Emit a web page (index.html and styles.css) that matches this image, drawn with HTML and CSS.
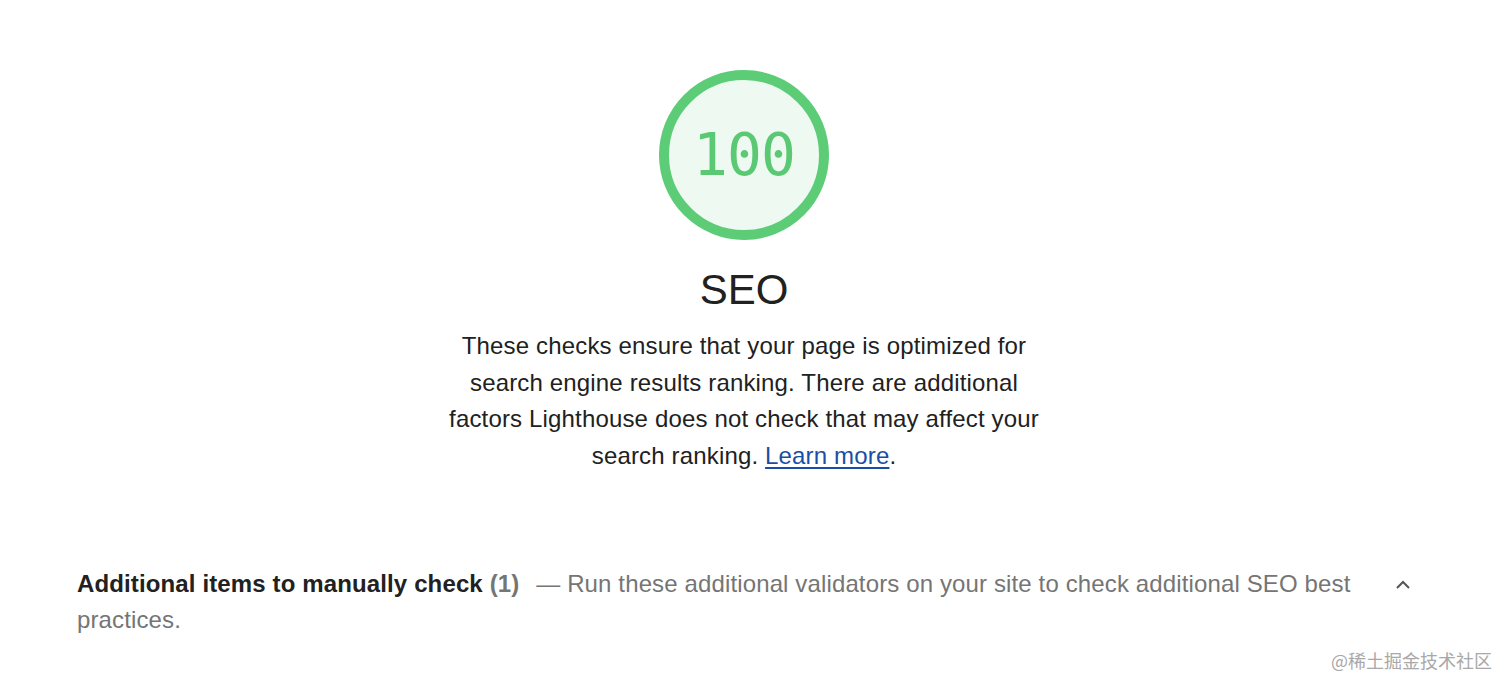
FILE: index.html
```html
<!DOCTYPE html>
<html lang="en">
<head>
<meta charset="utf-8">
<title>SEO</title>
<link rel="stylesheet" href="styles.css">
</head>
<body>
<main class="page">
  <section class="category-header">
    <div class="gauge">
      <svg class="gauge-svg" viewBox="0 0 170 170" width="170" height="170" aria-hidden="true">
        <circle cx="85" cy="85" r="80" fill="#eefaf1" stroke="#5ccc77" stroke-width="10"/>
      </svg>
      <span class="gauge-score">100</span>
    </div>
    <h2 class="category-title">SEO</h2>
    <p class="category-desc">These checks ensure that your page is optimized for search engine results ranking. There are additional factors Lighthouse does not check that may affect your search ranking. <a href="#" class="link">Learn more</a>.</p>
  </section>
  <section class="group">
    <div class="group-text">
      <span class="group-title">Additional items to manually check</span>
      <span class="group-count">(1)</span>
      <span class="group-desc">— Run these additional validators on your site to check additional SEO best practices.</span>
    </div>
    <svg class="chevron" viewBox="0 0 16 10" width="16" height="10" aria-hidden="true">
      <path d="M2 8 L8 2 L14 8" fill="none" stroke="#555" stroke-width="2"/>
    </svg>
  </section>
</main>
<div class="watermark">@稀土掘金技术社区</div>
</body>
</html>
```
FILE: styles.css
```css
html, body {
  margin: 0;
  padding: 0;
  background: #ffffff;
}
body {
  font-family: "Liberation Sans", Arial, sans-serif;
  color: #212121;
  position: relative;
  min-height: 691px;
}
.page {
  width: 1334px;
  margin-left: 77px;
  padding-top: 70px;
}
.category-header {
  display: flex;
  flex-direction: column;
  align-items: center;
}
.gauge {
  position: relative;
  width: 170px;
  height: 170px;
}
.gauge-svg {
  display: block;
}
.gauge-score {
  position: absolute;
  inset: 0;
  display: flex;
  align-items: center;
  justify-content: center;
  font-family: "DejaVu Sans Mono", "Liberation Mono", monospace;
  font-size: 58px;
  color: #5bc873;
  letter-spacing: -1px;
}
.category-title {
  margin: 29px 0 0;
  font-size: 42px;
  line-height: 42px;
  font-weight: 400;
  color: #212121;
}
.category-desc {
  margin: 17px 0 0;
  max-width: 600px;
  text-align: center;
  font-size: 24px;
  line-height: 36.67px;
  letter-spacing: 0.16px;
  color: #212121;
}
.link {
  color: #1a4ea4;
  text-decoration: underline;
  text-underline-offset: 3px;
}
.group {
  margin-top: 91px;
  display: flex;
  align-items: flex-start;
  gap: 40px;
}
.group-text {
  flex: 1;
  font-size: 24px;
  line-height: 36px;
  letter-spacing: 0.13px;
  color: #757575;
}
.group-title {
  font-weight: 700;
  color: #212121;
}
.group-count {
  font-weight: 700;
  color: #757575;
  margin-right: 10px;
}
.group-desc {
  color: #757575;
}
.chevron {
  flex: none;
  margin-top: 14px;
}
.watermark {
  position: absolute;
  right: 20px;
  top: 648px;
  font-family: "Noto Sans CJK SC", "Liberation Sans", sans-serif;
  font-size: 18px;
  line-height: 24px;
  color: #a8a8a8;
}
```
